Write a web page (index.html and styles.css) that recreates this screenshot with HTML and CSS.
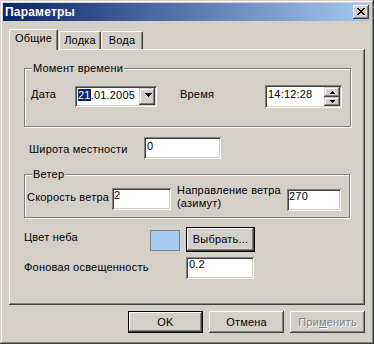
FILE: index.html
```html
<!DOCTYPE html>
<html lang="ru">
<head>
  <meta charset="UTF-8" />
  <title>Параметры</title>
  <link rel="stylesheet" href="styles.css">
</head>
<body>

  <div class="window">
    <!-- Title bar -->
    <div class="titlebar">
      <span class="title">Параметры</span>
      <button class="close-btn" aria-label="Закрыть">
        <svg width="8" height="7" viewBox="0 0 8 7" shape-rendering="crispEdges">
          <path d="M0 0h2v1h-2zM6 0h2v1h-2zM1 1h2v1h-2zM5 1h2v1h-2zM2 2h4v1h-4zM3 3h2v1h-2zM2 4h4v1h-4zM1 5h2v1h-2zM5 5h2v1h-2zM0 6h2v1h-2zM6 6h2v1h-2z" fill="#000"/>
        </svg>
      </button>
    </div>

    <!-- Tabs -->
    <div class="tabs">
      <div class="tab active">Общие</div>
      <div class="tab tab-boat">Лодка</div>
      <div class="tab tab-water">Вода</div>
    </div>

    <div class="panel">
      <!-- Moment of time -->
      <div class="group group-time">
        <div class="legend">Момент времени</div>
        <div class="group-row">
          <span class="label label-date">Дата</span>
          <div class="field combo">
            <span class="combo-text"><span class="selection">21</span>.01.2005</span>
            <span class="raised drop-btn">
              <svg width="7" height="4" viewBox="0 0 7 4" shape-rendering="crispEdges">
                <path d="M0 0h7v1h-7zM1 1h5v1h-5zM2 2h3v1h-3zM3 3h1v1h-1z" fill="#000"/>
              </svg>
            </span>
          </div>
          <span class="label label-time">Время</span>
          <div class="field spin">
            <span class="spin-text">14:12:28</span>
            <div class="spin-btns">
              <span class="raised spin-btn spin-up">
                <svg width="5" height="3" viewBox="0 0 5 3" shape-rendering="crispEdges">
                  <path d="M2 0h1v1h-1zM1 1h3v1h-3zM0 2h5v1h-5z" fill="#000"/>
                </svg>
              </span>
              <span class="raised spin-btn spin-down">
                <svg width="5" height="3" viewBox="0 0 5 3" shape-rendering="crispEdges">
                  <path d="M0 0h5v1h-5zM1 1h3v1h-3zM2 2h1v1h-1z" fill="#000"/>
                </svg>
              </span>
            </div>
          </div>
        </div>
      </div>

      <!-- Latitude -->
      <div class="row row-lat">
        <span class="label label-lat">Широта местности</span>
        <div class="field input-lat">0</div>
      </div>

      <!-- Wind -->
      <div class="group group-wind">
        <div class="legend">Ветер</div>
        <div class="group-row wind-row">
          <span class="label label-speed">Скорость ветра</span>
          <div class="field input-speed">2</div>
          <span class="label label-dir">Направление ветра<br>(азимут)</span>
          <div class="field input-dir">270</div>
        </div>
      </div>

      <!-- Sky colour -->
      <div class="row row-sky">
        <span class="label label-sky">Цвет неба</span>
        <div class="swatch"></div>
        <button class="btn default pick-btn">Выбрать...</button>
      </div>

      <!-- Background light -->
      <div class="row row-light">
        <span class="label label-light">Фоновая освещенность</span>
        <div class="field input-light">0.2</div>
      </div>
    </div>

    <!-- Dialog buttons -->
    <div class="buttons">
      <button class="btn default">OK</button>
      <button class="btn">Отмена</button>
      <button class="btn disabled">При<u>м</u>енить</button>
    </div>
  </div>

</body>
</html>
```

FILE: styles.css
```css
* {
  box-sizing: border-box;
  margin: 0;
  padding: 0;
}

body {
  background: #d4d0c8;
  font-family: "Liberation Sans", Arial, sans-serif;
  font-size: 11px;
  line-height: 13px;
  letter-spacing: 0.2px;
  color: #000;
}

/* Window frame */
.window {
  width: 374px;
  height: 344px;
  padding: 3px 4px 4px 3px;
  background: #d4d0c8;
  box-shadow: inset -1px -1px #404040, inset 1px 1px #d4d0c8,
              inset -2px -2px #808080, inset 2px 2px #fff;
}

.titlebar {
  height: 18px;
  display: flex;
  align-items: center;
  justify-content: space-between;
  padding: 0 1px 0 2px;
  background: linear-gradient(90deg, #0a246a, #a6caf0);
}

.title {
  color: #fff;
  font-size: 12px;
  font-weight: bold;
}

.close-btn {
  width: 16px;
  height: 14px;
  border: none;
  background: #d4d0c8;
  display: flex;
  align-items: flex-start;
  justify-content: flex-start;
  padding: 3px 0 0 4px;
  box-shadow: inset -1px -1px #404040, inset 1px 1px #fff,
              inset -2px -2px #808080, inset 2px 2px #d4d0c8;
}

.close-btn svg {
  display: block;
}

/* Raised 3D element */
.raised {
  background: #d4d0c8;
  box-shadow: inset -1px -1px #404040, inset 1px 1px #d4d0c8,
              inset -2px -2px #808080, inset 2px 2px #fff;
}

/* Tabs */
.tabs {
  display: flex;
  align-items: flex-end;
  height: 20px;
  margin: 8px 0 0 6px;
}

.tab {
  height: 18px;
  padding-top: 2px;
  text-align: center;
  border-top: 1px solid #fff;
  border-left: 1px solid #fff;
  border-right: 1px solid #404040;
  border-radius: 2px 2px 0 0;
  box-shadow: inset -1px 0 #808080;
}

.tab.active {
  width: 49px;
  height: 21px;
  margin-bottom: -1px;
  position: relative;
  z-index: 1;
  background: #d4d0c8;
}

.tab-boat {
  width: 42px;
  margin-left: 1px;
}

.tab-water {
  width: 42px;
}

/* Tab page */
.panel {
  width: 356px;
  height: 256px;
  margin-left: 6px;
  padding: 19px 0 0 15px;
  box-shadow: inset -1px -1px #404040, inset 1px 1px #fff,
              inset -2px -2px #808080;
}

/* Group boxes */
.group {
  border: 1px solid #808080;
  box-shadow: 1px 1px 0 #fff, inset 1px 1px 0 #fff;
}

.legend {
  width: fit-content;
  margin: -7px 0 0 7px;
  padding: 0 1px;
  background: #d4d0c8;
}

.group-row,
.row {
  display: flex;
  align-items: flex-start;
}

.group-time {
  width: 327px;
  height: 59px;
}

.group-time .group-row {
  margin-top: 10px;
  padding-left: 6px;
}

.label-date {
  width: 44px;
  margin-top: 3px;
}

.label-time {
  width: 85px;
  margin: 3px 0 0 23px;
}

/* Sunken edit field */
.field {
  background: #fff;
  height: 22px;
  padding: 1px 3px 0;
  box-shadow: inset 1px 1px #808080, inset -1px -1px #fff,
              inset 2px 2px #404040, inset -2px -2px #d4d0c8;
}

.combo {
  width: 82px;
  height: 21px;
  margin-top: 1px;
  padding: 2px;
  display: flex;
}

.combo-text {
  flex: 1;
  padding-left: 1px;
  line-height: 14px;
}

.selection {
  background: #0a246a;
  color: #fff;
}

.drop-btn {
  width: 16px;
  height: 17px;
  display: flex;
  justify-content: center;
  padding: 5px 0 0 2px;
}

.drop-btn svg,
.spin-btn svg {
  display: block;
}

.spin {
  width: 77px;
  height: 23px;
  padding: 2px;
  display: flex;
}

.spin-text {
  flex: 1;
  padding-left: 1px;
  padding-top: 1px;
}

.spin-btns {
  width: 16px;
  display: flex;
  flex-direction: column;
}

.spin-btn {
  display: flex;
  justify-content: center;
  align-items: center;
}

.spin-up {
  height: 10px;
}

.spin-down {
  height: 9px;
}

/* Latitude */
.row-lat {
  margin-top: 10px;
  padding-left: 5px;
}

.label-lat {
  width: 115px;
  margin-top: 6px;
}

.input-lat {
  width: 77px;
  padding-top: 3px;
}

/* Wind group */
.group-wind {
  width: 326px;
  height: 44px;
  margin-top: 15px;
}

.wind-row {
  margin-top: 3px;
  padding-left: 2px;
}

.label-speed {
  width: 85px;
  margin-top: 7px;
}

.input-speed {
  width: 59px;
  margin-top: 4px;
  padding-left: 2px;
}

.label-dir {
  width: 110px;
  margin-left: 6px;
}

.input-dir {
  width: 54px;
  margin-top: 5px;
  padding-left: 2px;
}

/* Sky colour */
.row-sky {
  margin-top: 9px;
}

.label-sky {
  width: 126px;
  margin-top: 4px;
}

.swatch {
  width: 30px;
  height: 21px;
  margin-top: 3px;
  background: #a6caf0;
  border: 1px solid #808080;
}

.pick-btn {
  width: 69px;
  height: 25px;
  margin-left: 6px;
}

/* Background light */
.row-light {
  margin-top: 5px;
}

.label-light {
  width: 162px;
  margin-top: 4px;
}

.input-light {
  width: 68px;
}

/* Buttons */
.btn {
  font: inherit;
  letter-spacing: inherit;
  color: #000;
  border: none;
  background: #d4d0c8;
  box-shadow: inset -1px -1px #404040, inset 1px 1px #fff,
              inset -2px -2px #808080, inset 2px 2px #d4d0c8;
}

.btn.default {
  border: 1px solid #000;
}

.btn.disabled {
  color: #808080;
  text-shadow: 1px 1px 0 #fff;
}

.buttons {
  display: flex;
  justify-content: flex-end;
  gap: 6px;
  margin-top: 6px;
  padding-right: 5px;
}

.buttons .btn {
  width: 75px;
  height: 22px;
}
```
